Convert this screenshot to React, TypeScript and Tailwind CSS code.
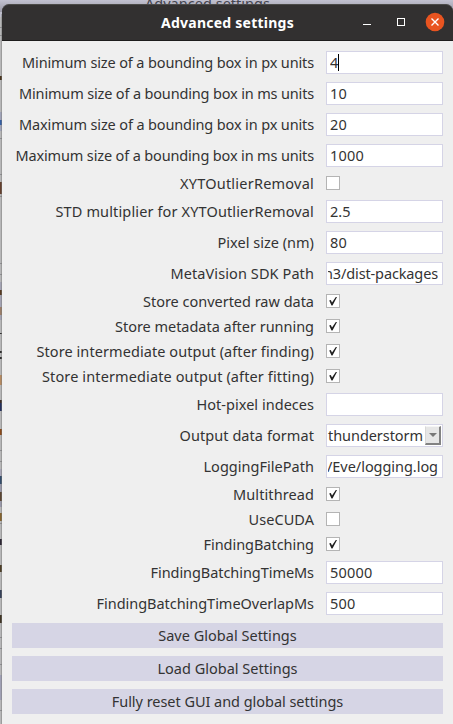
import { useLayoutEffect, useRef, useState } from "react";

type FitProps = { text: string; width: number; className?: string };

// Spreads the letters of a single line so that it fills the given width.
function Fit({ text, width, className = "" }: FitProps) {
  const ref = useRef<HTMLSpanElement>(null);
  const [spacing, setSpacing] = useState(0);
  useLayoutEffect(() => {
    const el = ref.current;
    if (!el) return;
    el.style.letterSpacing = "0px";
    const natural = el.getBoundingClientRect().width;
    const next = (width - natural) / text.length;
    el.style.letterSpacing = `${next}px`;
    setSpacing(next);
  }, [text, width]);
  return (
    <span ref={ref} className={`inline-block whitespace-pre ${className}`} style={{ letterSpacing: `${spacing}px` }}>
      {text}
    </span>
  );
}

type Row = {
  label: string;
  width: number;
  kind: "text" | "check" | "select";
  value?: string;
  valueWidth?: number;
  checked?: boolean;
  caret?: boolean;
  end?: boolean;
};

const rows: Row[] = [
  { label: "Minimum size of a bounding box in px units", width: 292, kind: "text", value: "4", valueWidth: 8, caret: true },
  { label: "Minimum size of a bounding box in ms units", width: 295, kind: "text", value: "10", valueWidth: 17 },
  { label: "Maximum size of a bounding box in px units", width: 295, kind: "text", value: "20", valueWidth: 17 },
  { label: "Maximum size of a bounding box in ms units", width: 298.5, kind: "text", value: "1000", valueWidth: 34 },
  { label: "XYTOutlierRemoval", width: 134, kind: "check" },
  { label: "STD multiplier for XYTOutlierRemoval", width: 258.5, kind: "text", value: "2.5", valueWidth: 20.5 },
  { label: "Pixel size (nm)", width: 96.5, kind: "text", value: "80", valueWidth: 17 },
  { label: "MetaVision SDK Path", width: 143.5, kind: "text", value: "n3/dist-packages", valueWidth: 114, end: true },
  { label: "Store converted raw data", width: 171, kind: "check", checked: true },
  { label: "Store metadata after running", width: 199, kind: "check", checked: true },
  { label: "Store intermediate output (after finding)", width: 277.5, kind: "check", checked: true },
  { label: "Store intermediate output (after fitting)", width: 272, kind: "check", checked: true },
  { label: "Hot-pixel indeces", width: 117.5, kind: "text", value: "" },
  { label: "Output data format", width: 134.5, kind: "select", value: "thunderstorm", valueWidth: 95 },
  { label: "LoggingFilePath", width: 110.5, kind: "text", value: "/Eve/logging.log", valueWidth: 111, end: true },
  { label: "Multithread", width: 81, kind: "check", checked: true },
  { label: "UseCUDA", width: 65.5, kind: "check" },
  { label: "FindingBatching", width: 110.5, kind: "check", checked: true },
  { label: "FindingBatchingTimeMs", width: 163.5, kind: "text", value: "50000", valueWidth: 42.5 },
  { label: "FindingBatchingTimeOverlapMs", width: 217.5, kind: "text", value: "500", valueWidth: 25.5 },
];

const buttons = [
  { text: "Save Global Settings", width: 138.5 },
  { text: "Load Global Settings", width: 140 },
  { text: "Fully reset GUI and global settings", width: 231.5 },
];

function CheckBox({ checked }: { checked?: boolean }) {
  return (
    <div className="h-[14px] w-[14px] border border-[#b4b4b4] bg-white">
      {checked && (
        <svg viewBox="0 0 12 12" className="block h-3 w-3">
          <path d="M2.2 5.6 L3.8 4.9 L5 7.4 L8.8 1.9 L10 1.9 L5.5 10.5 L4.5 10.5 Z" fill="#202020" />
        </svg>
      )}
    </div>
  );
}

function Field({ row }: { row: Row }) {
  if (row.kind === "check") return <CheckBox checked={row.checked} />;
  if (row.kind === "select") {
    return (
      <div className="flex h-[23px] w-[117px] items-center justify-between border border-[#d5d4e6] bg-white pr-px pl-px">
        <Fit text={row.value!} width={row.valueWidth!} />
        <div className="flex h-[19px] w-4 items-center justify-center border-t border-r-2 border-b-2 border-l border-t-[#f5f5f5] border-r-[#828282] border-b-[#828282] border-l-[#d8d8d8] bg-[#e6e6e6]">
          <svg viewBox="0 0 8 4" className="h-1 w-2">
            <path d="M0 0H8L4 4Z" fill="#777" />
          </svg>
        </div>
      </div>
    );
  }
  return (
    <div
      className={`flex h-[23px] w-[117px] items-center border border-[#d5d4e6] bg-white ${
        row.end ? "justify-end pr-[4px] pl-px" : "pl-[3px]"
      }`}
    >
      <div className={`flex items-center overflow-hidden ${row.end ? "max-w-[111px] justify-end" : ""}`}>
        {row.value && <Fit text={row.value} width={row.valueWidth!} />}
        {row.caret && <span className="h-[17px] w-px bg-black" />}
      </div>
    </div>
  );
}

// Slivers of the window that lies behind, seen at the left edge.
const slivers = [
  [0, 17, "#bdbdcb"], [27, 1, "#8e8e91"], [35, 1, "#8e8e91"], [76, 4, "#49351f"],
  [112, 19, "#9fa3b8"], [120, 5, "#355fa3"], [138, 1, "#8e8e91"], [174, 1, "#8e8e91"],
  [182, 12, "#64402e"], [196, 1, "#8e8e91"], [263, 1, "#8e8e91"], [274, 1, "#8e8e91"],
  [282, 38, "#a3a3b3"], [290, 5, "#573b22"], [307, 8, "#9a7d68"], [333, 1, "#303030"],
  [351, 2, "#303030"], [357, 2, "#303030"], [375, 10, "#b58a61"], [400, 3, "#3d2d25"],
  [403, 8, "#24305c"], [429, 6, "#8a4b1b"], [450, 1, "#8e8e91"], [461, 1, "#8e8e91"],
  [469, 7, "#aaa8b8"], [476, 8, "#344d6b"], [484, 23, "#9999aa"], [492, 9, "#5b4533"],
  [513, 8, "#85632f"], [523, 1, "#8e8e91"], [539, 6, "#2d2734"], [565, 7, "#4d3e27"],
  [590, 8, "#374259"], [615, 8, "#403525"], [637, 1, "#8e8e91"], [648, 1, "#8e8e91"],
  [664, 1, "#8e8e91"], [675, 25, "#9fa0b4"], [710, 1, "#8e8e91"],
] as const;

export default function App() {
  return (
    <div className="relative h-[724px] w-[453px] overflow-hidden bg-[#b7b7b8] font-['Noto_Sans','Open_Sans',sans-serif] text-[14.5px] leading-[19px] text-[#333]">
      <svg className="absolute top-0 left-0 h-[724px] w-[2px]" viewBox="0 0 2 724">
        {slivers.map(([y, h, fill]) => (
          <rect key={y} x="0" y={y} width="2" height={h} fill={fill} />
        ))}
        <rect x="1.3" y="14" width="0.7" height="710" fill="#777" opacity="0.6" />
      </svg>
      <div className="absolute inset-x-0 top-0 h-3 overflow-hidden bg-gradient-to-b from-[#c2c1d0] to-[#9998a5]">
        <div className="-mt-[6px] pl-[145px] text-[#454550]">
          <Fit text="Advanced settings" width={125} />
        </div>
      </div>

      <div className="relative flex h-full flex-col pt-[4px] pl-[2px]">
        <header className="flex h-[37px] shrink-0 items-center rounded-t-[7px] border-t border-b border-t-[#4b4a48] border-b-[#1d1c1c] bg-[#323030] text-white">
          <div className="flex-1 pl-[159px] text-[14px] font-bold">
            <Fit text="Advanced settings" width={133} />
          </div>
          <svg className="h-[35px] w-[100px]" viewBox="0 0 100 35">
            <path d="M10 19.5H18" stroke="#fff" strokeWidth="1" />
            <rect x="44.5" y="13.5" width="7" height="7" fill="none" stroke="#fff" />
            <circle cx="82" cy="17" r="9.3" fill="#e95420" />
            <path d="M78.5 13.5L85.5 20.5M85.5 13.5L78.5 20.5" stroke="#fff" strokeWidth="1.4" />
          </svg>
        </header>

        <main className="flex flex-1 flex-col bg-[#efefef] pt-[6px]">
          {rows.map((row) => (
            <div
              key={row.label}
              className={`grid grid-cols-[312px_117px] gap-x-3 ${row.kind === "check" ? "h-[25px] pt-[5px]" : "h-[31px] pt-[4px]"}`}
            >
              <div className={`flex justify-end ${row.kind === "check" ? "-mt-[2px]" : "pt-[2px]"}`}>
                <Fit text={row.label} width={row.width} />
              </div>
              <Field row={row} />
            </div>
          ))}
          <div className="flex flex-col gap-2 pt-[4px] pr-[10px] pl-[10px]">
            {buttons.map((b) => (
              <button key={b.text} className="flex h-[25px] items-center justify-center bg-[#d6d5e5]">
                <Fit text={b.text} width={b.width} />
              </button>
            ))}
          </div>
        </main>
      </div>
    </div>
  );
}
